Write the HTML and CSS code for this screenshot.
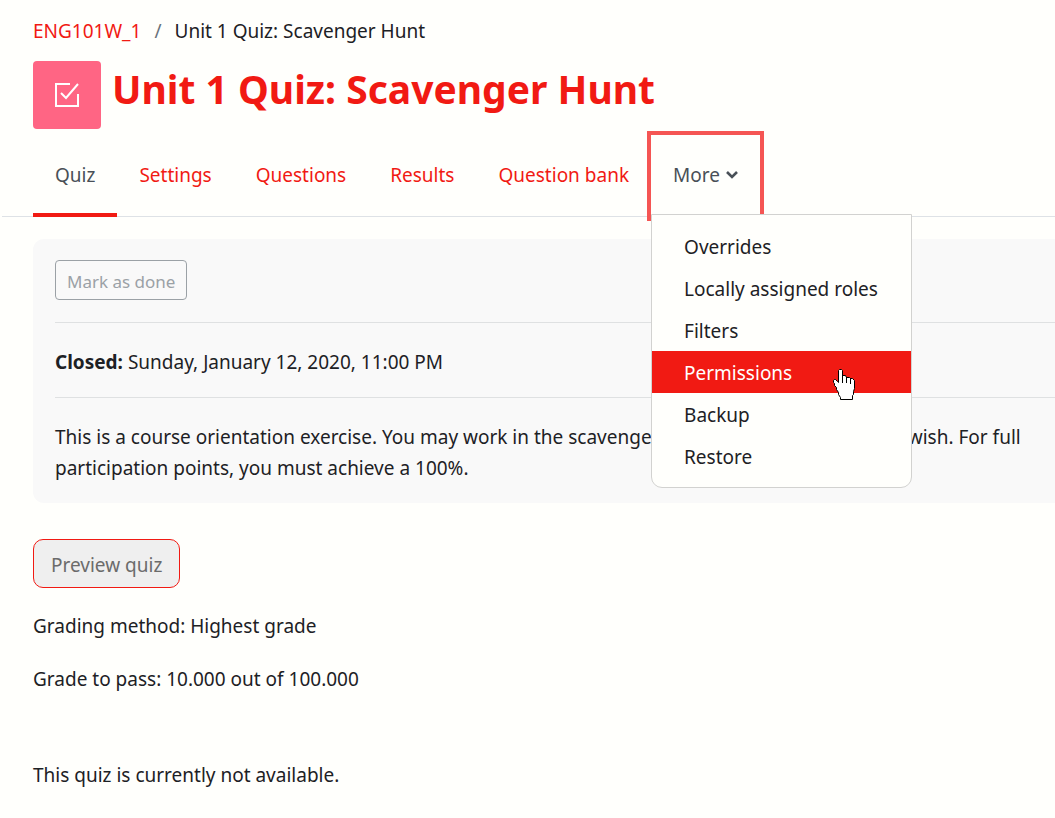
FILE: index.html
```
<!DOCTYPE html>
<html lang="en">
<head>
  <meta charset="UTF-8">
  <meta name="viewport" content="width=device-width, initial-scale=1.0">
  <title>Unit 1 Quiz: Scavenger Hunt</title>
  <link rel="stylesheet" href="styles.css">
</head>
<body>
  <header class="page-header">
    <nav class="breadcrumb" aria-label="Breadcrumb">
      <a href="#">ENG101W_1</a>
      <span class="separator">/</span>
      <span>Unit 1 Quiz: Scavenger Hunt</span>
    </nav>
    <div class="heading">
      <div class="activity-icon">
        <svg width="24" height="24" viewBox="0 0 24 24" fill="none" stroke="#fff" stroke-width="2">
          <path d="M15 1H1v22h22V11"/>
          <path d="M6 10l5 5L23 1"/>
        </svg>
      </div>
      <h1>Unit 1 Quiz: Scavenger Hunt</h1>
    </div>
  </header>

  <nav class="tabs" aria-label="Quiz navigation">
    <a class="tab active" href="#">Quiz</a>
    <a class="tab" href="#">Settings</a>
    <a class="tab" href="#">Questions</a>
    <a class="tab" href="#">Results</a>
    <a class="tab" href="#">Question bank</a>
    <div class="more">
      <button class="tab more-button" type="button">More
        <svg width="12" height="8" viewBox="0 0 12 8" fill="none" stroke="currentColor" stroke-width="2.600">
          <path d="M1 1l5 5 5-5"/>
        </svg>
      </button>
      <div class="menu">
        <a href="#">Overrides</a>
        <a href="#">Locally assigned roles</a>
        <a href="#">Filters</a>
        <a class="selected" href="#">Permissions</a>
        <a href="#">Backup</a>
        <a href="#">Restore</a>
        <svg class="pointer" width="22" height="31" viewBox="0 0 22 31">
          <path d="M5.500 1.500l1-1h2l1 1v5h3l1 2h3l1 1h2l2 2v8l-1 3v3l-1 1v4H7.500v-2l-2-3v-2l-2-3v-2l-2-2v-2l-1-1v-2l1-1h1l2 2 1 1z" fill="#fff" stroke="#000"/>
          <path d="M9.500 6v8M13.500 8v6M17.500 9v6" stroke="#000"/>
        </svg>
      </div>
    </div>
  </nav>

  <main>
    <section class="activity">
      <button class="done" type="button" disabled>Mark as done</button>
      <p class="dates"><strong>Closed:</strong> Sunday, January 12, 2020, 11:00 PM</p>
      <p class="description">This is a course orientation exercise. You may work in the scavenger hunt as many times as you wish. For full participation points, you must achieve a 100%.</p>
    </section>
    <button class="preview" type="button">Preview quiz</button>
    <p>Grading method: Highest grade</p>
    <p>Grade to pass: 10.000 out of 100.000</p>
    <p class="notice">This quiz is currently not available.</p>
  </main>
</body>
</html>
```
FILE: styles.css
```
* {
  box-sizing: border-box;
}

body {
  margin: 0;
  background: #fffffc;
  color: #1d2125;
  font-family: "Noto Sans", "Open Sans", sans-serif;
  font-size: 19px;
  line-height: 31px;
}

a {
  color: #f11a13;
  text-decoration: none;
}

button {
  font: inherit;
}

p {
  margin: 0 0 22px;
}

.page-header {
  padding: 16px 33px 0;
}

.breadcrumb {
  display: flex;
  gap: 13px;
}

.separator {
  color: #6a737b;
}

.heading {
  display: flex;
  gap: 11px;
  margin-top: 14px;
}

.activity-icon {
  display: flex;
  align-items: center;
  justify-content: center;
  width: 68px;
  height: 68px;
  border-radius: 4px;
  background: #ff6584;
}

h1 {
  margin: 0;
  color: #f11a13;
  font-size: 39px;
  line-height: 56px;
}

.tabs {
  display: flex;
  margin: 2px 0 22px 2px;
  padding-left: 31px;
  border-bottom: 1px solid #dee2e6;
}

.tab {
  height: 86px;
  margin-bottom: -1px;
  padding: 29px 22px 0;
  border-bottom: 4px solid transparent;
}

.tab.active {
  color: #495057;
  border-bottom-color: #f11a13;
}

.more {
  position: relative;
}

/* red frame around the open menu tab */
.more::before {
  content: "";
  position: absolute;
  inset: 0 -4px -5px;
  border: 4px solid #f55553;
  border-bottom: none;
  pointer-events: none;
}

.more-button {
  display: flex;
  gap: 6px;
  border-width: 0;
  background: none;
  color: #495057;
}

.more-button svg {
  margin-top: 11px;
}

.menu {
  position: absolute;
  top: 83px;
  left: 0;
  width: 261px;
  padding: 10px 0;
  border: 1px solid #d2d2d0;
  border-radius: 0 0 11px 11px;
  background: #fffffc;
}

.menu a {
  display: block;
  padding: 7px 32px 4px;
  color: #1d2125;
}

.menu a.selected {
  background: #f11a13;
  color: #fff;
}

.pointer {
  position: absolute;
  top: 154px;
  left: 181px;
}

main {
  padding-left: 33px;
}

.activity {
  margin-bottom: 36px;
  padding: 21px 0 19px 22px;
  border-radius: 11px 0 0 11px;
  background: #f9f9f9;
}

.activity p {
  margin: 0;
  border-top: 1px solid #dfe1e2;
}

.done {
  display: block;
  height: 40px;
  margin-bottom: 22px;
  padding: 2px 11px 0;
  border: 1px solid #9ba1a6;
  border-radius: 4px;
  background: none;
  color: #9ba1a6;
  font-size: 17px;
}

.activity .dates {
  padding: 24px 0 19px;
}

.activity .description {
  padding: 24px 22px 0 0;
}

.preview {
  display: block;
  height: 49px;
  margin-bottom: 23px;
  padding: 3px 17px 0;
  border: 1px solid #f11a13;
  border-radius: 10px;
  background: #efefef;
  color: #6b6b6b;
}

.notice {
  margin-top: 65px;
}
```
